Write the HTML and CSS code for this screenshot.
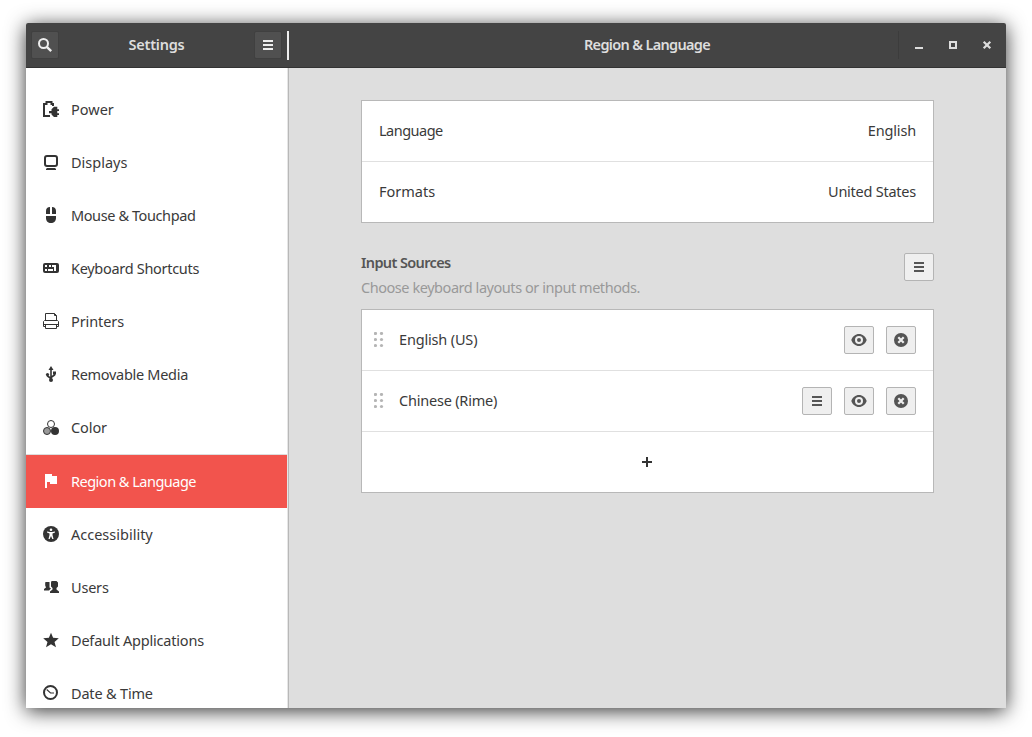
FILE: index.html
```html
<!DOCTYPE html>
<html lang="en">
<head>
<meta charset="utf-8">
<title>Settings</title>
<link rel="stylesheet" href="styles.css">
</head>
<body>
<svg class="defs" width="0" height="0">
  <symbol id="menu" viewBox="0 0 16 16"><path d="M3 3h10v2H3zM3 7h10v2H3zM3 11h10v2H3z"/></symbol>
  <symbol id="eye" viewBox="0 0 16 16"><path fill-rule="evenodd" d="M8 2C4.500 2 1.500 4.500.3 8 1.500 11.500 4.500 14 8 14s6.500-2.500 7.700-6C14.500 4.500 11.500 2 8 2zm0 2a4 4 0 110 8 4 4 0 010-8zm0 2a2 2 0 100 4 2 2 0 000-4z"/></symbol>
  <symbol id="remove" viewBox="0 0 16 16"><circle cx="8" cy="8" r="7"/><path d="M5.300 5.300l5.400 5.400M10.700 5.300l-5.400 5.400" stroke="#efefef" stroke-width="2.200"/></symbol>
  <symbol id="grip" viewBox="0 0 10 16"><circle cx="1.500" cy="1.500" r="1.600"/><circle cx="7.500" cy="1.500" r="1.600"/><circle cx="1.500" cy="7.500" r="1.600"/><circle cx="7.500" cy="7.500" r="1.600"/><circle cx="1.500" cy="13.500" r="1.600"/><circle cx="7.500" cy="13.500" r="1.600"/></symbol>
</svg>
<div class="window">
  <header class="header">
    <div class="header-left">
      <button class="hbtn" aria-label="Search"><svg width="16" height="16" viewBox="0 0 16 16"><circle cx="6.500" cy="6.500" r="4.500" fill="none" stroke="#eee" stroke-width="2"/><path d="M9.800 9.800l4.400 4.400" stroke="#eee" stroke-width="2.400"/></svg></button>
      <span class="title t-settings">Settings</span>
      <button class="hbtn" aria-label="Menu"><svg width="16" height="16"><use href="#menu"/></svg></button>
    </div>
    <div class="divider"></div>
    <div class="header-main">
      <span class="title t-page">Region &amp; Language</span>
      <div class="controls">
        <svg width="16" height="16"><path d="M4 10h8v2H4z"/></svg>
        <svg width="16" height="16"><path fill-rule="evenodd" d="M4 4h8v8H4zM6 6v4h4V6z"/></svg>
        <svg width="16" height="16"><path d="M4.700 4.700l6.600 6.600M11.300 4.700l-6.600 6.600" stroke="#ddd" stroke-width="2.200"/></svg>
      </div>
    </div>
  </header>
  <div class="body">
    <nav class="sidebar">
      <a class="item"><svg viewBox="0 0 16 16"><path d="M7 15H1V3h2.500V1h5v2H10v2" fill="none" stroke="#333" stroke-width="2"/><path d="M11 5.700h3.300v2.600H16V10h-1.700v2.300H16V14h-1.700v2H11l-2.500-2.500v-1.200H6V10h2.500V8.200z"/></svg><span class="s1">Power</span></a>
      <a class="item"><svg viewBox="0 0 16 16"><rect x="2" y="2" width="12" height="10" rx="2" fill="none" stroke="#333" stroke-width="2"/><path d="M4 14h8l1 1v1H3v-1z"/></svg><span class="s2">Displays</span></a>
      <a class="item"><svg viewBox="0 0 16 16"><path d="M7 0v7H3V4c0-2.500 1.500-4 4-4zM9 0v7h4V4c0-2.500-1.500-4-4-4zM3 9h10v2c0 3-2 5-5 5s-5-2-5-5z"/></svg><span class="s3">Mouse &amp; Touchpad</span></a>
      <a class="item"><svg viewBox="0 0 16 16"><rect y="3" width="16" height="10" rx="2"/><path fill="#fff" d="M2 5h2v2H2zM6 5h2v2H6zM9 5h4v6h-2V7H9zM2 9h2v2H2zM5 9h5v2H5z"/></svg><span class="s4">Keyboard Shortcuts</span></a>
      <a class="item"><svg viewBox="0 0 16 16"><path d="M2.500 7V.5h9l2 2V7M11.500.5v2h2M2.500 13.500h-2v-5l1-1h13l1 1v5h-2M.5 11.500h15M2.500 11.500v4h11v-4" fill="none" stroke="#333"/></svg><span class="s5">Printers</span></a>
      <a class="item"><svg viewBox="0 0 16 16"><path d="M8 2v12M4.500 8v2L8 12.500M11.500 7v2L8 11.500" fill="none" stroke="#333" stroke-width="1.600"/><path d="M8 0l2.500 4h-5zM10 5.500h3v3h-3z"/><circle cx="4.500" cy="8.500" r="1.600"/><circle cx="8" cy="14" r="2"/></svg><span class="s6">Removable Media</span></a>
      <a class="item"><svg viewBox="0 0 16 16"><circle cx="4" cy="12" r="3.500" fill="#999" stroke="#333"/><circle cx="12" cy="12" r="4"/><circle cx="8" cy="5" r="3.500" fill="#fff" stroke="#333"/></svg><span class="s7">Color</span></a>
      <a class="item active"><svg viewBox="0 0 16 16"><path d="M2 1h7v2h5v8H7V9H4v6H2z"/></svg><span class="s8">Region &amp; Language</span></a>
      <a class="item"><svg viewBox="0 0 16 16"><circle cx="8" cy="8" r="8"/><circle cx="8" cy="3.700" r="1.300" fill="#fff"/><path d="M4 5.500l3 .5h2l3-.5v1L9.500 7.400V9l1 4H9.300L8 10l-1.300 3H5.500l1-4V7.400L4 6.500z" fill="#fff"/></svg><span class="s9">Accessibility</span></a>
      <a class="item"><svg viewBox="0 0 16 16"><path d="M8.500 2h5l1.500 1.500v4L13.500 9v1.500l2.500 2V14H7v-1.500l2.500-2V9L8 7.500v-4zM2.500 3h4v5.500l1.500 1-2 2H1v-1.500l2-1.500-.8-2V4z"/></svg><span class="s10">Users</span></a>
      <a class="item"><svg viewBox="0 0 16 16"><path d="M8 .7l2.100 5.100 5.700.4-4.300 3.700 1.500 5.400L8 12.300l-5 3 1.500-5.400L.2 6.200l5.700-.4z"/></svg><span class="s11">Default Applications</span></a>
      <a class="item"><svg viewBox="0 0 16 16"><circle cx="7.500" cy="7.500" r="6.500" fill="none" stroke="#333" stroke-width="2"/><path d="M3.700 4.500L7.500 8H11" fill="none" stroke="#333" stroke-width="1.100"/></svg><span class="s12">Date &amp; Time</span></a>
    </nav>
    <main class="main">
      <section class="card">
        <div class="row pair"><span class="m1">Language</span><span class="m2">English</span></div>
        <div class="row pair"><span class="m3">Formats</span><span class="m4">United States</span></div>
      </section>
      <div class="heading">
        <div><h2 class="m5">Input Sources</h2><p class="m6">Choose keyboard layouts or input methods.</p></div>
        <button class="btn" aria-label="Options"><svg width="16" height="16"><use href="#menu"/></svg></button>
      </div>
      <section class="card">
        <div class="row source"><svg class="grip" width="10" height="16"><use href="#grip"/></svg><span class="name m7">English (US)</span>
          <button class="btn" aria-label="View"><svg width="16" height="16"><use href="#eye"/></svg></button>
          <button class="btn" aria-label="Remove"><svg width="16" height="16"><use href="#remove"/></svg></button></div>
        <div class="row source"><svg class="grip" width="10" height="16"><use href="#grip"/></svg><span class="name m8">Chinese (Rime)</span>
          <button class="btn" aria-label="Preferences"><svg width="16" height="16"><use href="#menu"/></svg></button>
          <button class="btn" aria-label="View"><svg width="16" height="16"><use href="#eye"/></svg></button>
          <button class="btn" aria-label="Remove"><svg width="16" height="16"><use href="#remove"/></svg></button></div>
        <div class="row add"><svg width="16" height="16"><path d="M7 3h2v4h4v2H9v4H7V9H3V7h4z"/></svg></div>
      </section>
    </main>
  </div>
</div>
</body>
</html>
```
FILE: styles.css
```css
* { box-sizing: border-box; }
body { margin: 0; height: 737px; padding: 23px 26px 29px; overflow: hidden; background: #fff; color: #3a3a3a; font: 14.5px/20px "Noto Sans", sans-serif; }
span, h2, p { white-space: nowrap; }
.defs { position: absolute; }
svg { display: block; flex: none; }
button { padding: 0; font: inherit; display: flex; align-items: center; justify-content: center; flex: none; }
.window { height: 685px; display: flex; flex-direction: column; border-radius: 2px 2px 0 0; box-shadow: 0 3px 20px rgba(0,0,0,.8); }
.header { height: 45px; flex: none; display: flex; align-items: center; background: #444; border-bottom: 1px solid #333; border-radius: 2px 2px 0 0; color: #ddd; fill: #ddd; }
.header-left { width: 261px; padding: 0 5px; display: flex; align-items: center; justify-content: space-between; }
.hbtn { width: 28px; height: 28px; border: 1px solid #404040; border-radius: 2px; background: #505050; fill: #eee; }
.title { font-weight: 600; font-size: 14.5px; padding-bottom: 2px; }
.divider { width: 2px; height: 29px; background: #eee; }
.header-main { flex: 1; display: grid; grid-template-columns: 107px 1fr 108px; align-items: center; }
.t-page { grid-column: 2; justify-self: center; }
.controls { height: 28px; display: flex; align-items: center; gap: 18px; padding-left: 12px; border-left: 1px solid #3c3c3c; }
.body { flex: 1; min-height: 0; display: flex; }
.sidebar { width: 263px; padding: 15px 0 0; overflow: hidden; background: #fff; border-right: 1px solid #b8b8b8; box-shadow: inset -1px 0 #e6e6e6; }
.item { height: 53px; margin-right: 1px; padding: 0 17px 1px; display: flex; align-items: center; gap: 12px; fill: #333; }
.item svg { width: 16px; height: 16px; }
.item.active { height: 54px; border-top: 1px solid #ddd; background: #f2544d; background-clip: padding-box; color: #fff; fill: #fff; }
.main { flex: 1; padding: 32px 72px 0; background: #dedede; }
.card { background: #fff; border: 1px solid #b8b8b8; }
.row { height: 60px; display: flex; align-items: center; }
.row span { padding-bottom: 2px; }
.row + .row { height: 61px; border-top: 1px solid #e0e0e0; }
.pair { justify-content: space-between; padding: 0 17px; }
.heading { height: 86px; padding-top: 30px; display: flex; justify-content: space-between; }
h2, p { width: max-content; margin: 0; font-size: 14.5px; line-height: 20px; }
h2 { margin-top: -1px; font-weight: 600; color: #555; }
p { margin-top: 5px; color: #999; }
.btn { width: 30px; height: 28px; border: 1px solid #b4b4b4; border-radius: 2px; background: #efefef; fill: #555; }
.source { padding: 0 17px 0 12px; gap: 12px; }
.grip { fill: #b5b5b5; margin-right: 3px; }
.name { flex: 1; }
.add { justify-content: center; padding-right: 2px; fill: #333; }

/* Label tracking */
.s3 { letter-spacing: -.4px; }
.s4, .s6 { letter-spacing: -.3px; }
.s5, .s7 { letter-spacing: -.1px; }
.s8 { letter-spacing: -.5px; }
.s10, .s11 { letter-spacing: -.2px; }
.s12 { letter-spacing: -.18px; }
.t-settings { letter-spacing: -.25px; }
.t-page { letter-spacing: -.67px; }
.m1 { letter-spacing: -.5px; }
.m2 { letter-spacing: -.15px; }
.m4 { letter-spacing: -.24px; }
.m5 { letter-spacing: -.62px; }
.m6 { letter-spacing: -.45px; }
.m7 { letter-spacing: -.17px; }
.m8 { letter-spacing: -.21px; }
```
